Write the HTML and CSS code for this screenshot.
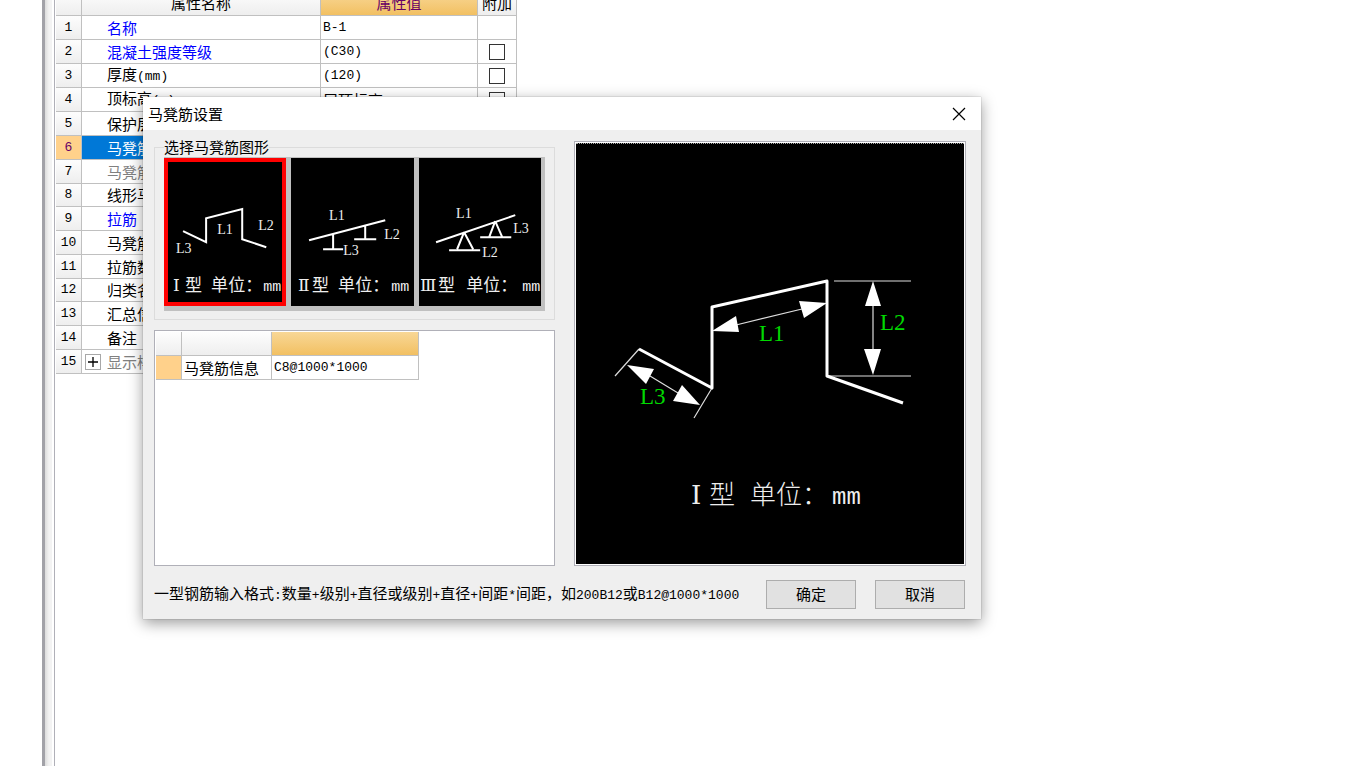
FILE: index.html
```html
<!DOCTYPE html>
<html lang="zh-CN">
<head>
<meta charset="utf-8">
<title>马凳筋设置</title>
<link rel="stylesheet" href="styles.css">
</head>
<body>
<div class="workspace">
  <div class="splitter"></div>
  <main class="properties">
    <table class="grid property-grid">
      <colgroup><col class="col-index"><col class="col-name"><col class="col-value"><col class="col-extra"></colgroup>
      <thead>
        <tr><th></th><th>属性名称</th><th class="active-head">属性值</th><th>附加</th></tr>
      </thead>
      <tbody>
        <tr><th class="latin">1</th><td class="name link">名称</td><td class="latin">B-1</td><td></td></tr>
        <tr><th class="latin">2</th><td class="name link">混凝土强度等级</td><td class="latin">(C30)</td><td class="tick"><input type="checkbox" aria-label="附加 混凝土强度等级"></td></tr>
        <tr><th class="latin">3</th><td class="name">厚度<span class="latin">(mm)</span></td><td class="latin">(120)</td><td class="tick"><input type="checkbox" aria-label="附加 厚度"></td></tr>
        <tr><th class="latin">4</th><td class="name">顶标高<span class="latin">(m)</span></td><td>层顶标高</td><td class="tick"><input type="checkbox" aria-label="附加 顶标高"></td></tr>
        <tr><th class="latin">5</th><td class="name">保护层厚度</td><td></td><td></td></tr>
        <tr class="selected"><th class="latin">6</th><td class="name">马凳筋参数图</td><td></td><td></td></tr>
        <tr><th class="latin">7</th><td class="name muted">马凳筋信息</td><td></td><td></td></tr>
        <tr><th class="latin">8</th><td class="name">线形马凳筋方向</td><td></td><td></td></tr>
        <tr><th class="latin">9</th><td class="name link">拉筋</td><td></td><td></td></tr>
        <tr><th class="latin">10</th><td class="name">马凳筋数量计算</td><td></td><td></td></tr>
        <tr><th class="latin">11</th><td class="name">拉筋数量计算</td><td></td><td></td></tr>
        <tr><th class="latin">12</th><td class="name">归类名称</td><td></td><td></td></tr>
        <tr><th class="latin">13</th><td class="name">汇总信息</td><td></td><td></td></tr>
        <tr><th class="latin">14</th><td class="name">备注</td><td></td><td></td></tr>
        <tr><th class="latin">15</th><td class="name muted expandable"><span class="tree-cell"><button class="expander" aria-label="展开"><svg viewBox="0 0 10 10" width="10" height="10"><path d="M0 5H10M5 0V10"/></svg></button>显示样式</span></td><td></td><td></td></tr>
      </tbody>
    </table>
  </main>
</div>

<section class="dialog" role="dialog" aria-labelledby="dialog-title">
  <header class="titlebar">
    <h1 id="dialog-title">马凳筋设置</h1>
    <button class="close" aria-label="关闭"><svg viewBox="0 0 14 14" width="14" height="14"><path d="M1 1L13 13M13 1L1 13"/></svg></button>
  </header>
  <div class="content">
    <div class="left">
      <fieldset class="shapes">
        <legend>选择马凳筋图形</legend>
        <div class="thumbs">
          <button class="thumb chosen" aria-pressed="true">
            <svg viewBox="0 0 122 148">
              <path class="bar" d="M19 73L42 84V60L78 51V81L102 89"/>
              <text class="mark" x="53" y="76">L1</text><text class="mark" x="94" y="72">L2</text><text class="mark" x="12" y="95">L3</text>
              <text class="caption" y="133"><tspan class="numeral" x="9">Ⅰ</tspan><tspan x="21">型</tspan><tspan x="47">单位：</tspan><tspan class="unit" x="99">mm</tspan></text>
            </svg>
          </button>
          <button class="thumb" aria-pressed="false">
            <svg viewBox="0 0 122 148">
              <path class="bar" d="M18 82L94 62M42 76V91M32 91H52M74 67V81M63 81H85"/>
              <text class="mark" x="38" y="62">L1</text><text class="mark" x="93" y="81">L2</text><text class="mark" x="52" y="97">L3</text>
              <text class="caption" y="133"><tspan class="numeral" x="7">Ⅱ</tspan><tspan x="21">型</tspan><tspan x="47">单位：</tspan><tspan class="unit" x="100">mm</tspan></text>
            </svg>
          </button>
          <button class="thumb" aria-pressed="false">
            <svg viewBox="0 0 122 148">
              <path class="bar" d="M17 84L96 57M30 92H61M61 79H92M45 74L38 91M45 74L54 91M76 63L70 79M76 63L83 79"/>
              <text class="mark" x="37" y="60">L1</text><text class="mark" x="63" y="99">L2</text><text class="mark" x="94" y="75">L3</text>
              <text class="caption" y="133"><tspan class="numeral" x="1">Ⅲ</tspan><tspan x="19">型</tspan><tspan x="47">单位：</tspan><tspan class="unit" x="103">mm</tspan></text>
            </svg>
          </button>
        </div>
      </fieldset>
      <div class="info-box">
        <table class="grid info-grid">
          <colgroup><col class="col-index"><col class="col-label"><col class="col-input"></colgroup>
          <thead><tr><th></th><th></th><th class="active-head"></th></tr></thead>
          <tbody><tr class="current"><th></th><td>马凳筋信息</td><td class="latin">C8@1000*1000</td></tr></tbody>
        </table>
      </div>
    </div>
    <div class="preview">
      <svg viewBox="0 1 388 420">
        <path class="fine" d="M39 233L63 206M136 245L118 275M258 138H335M251 233H335M297 160V210M160 182L226 166M74 233L102 250"/>
        <path class="heavy" d="M63 206L136 245V164L251 138V233L327 260"/>
        <path class="arrow" d="M297 138L289 163H305ZM297 232L288 206H305ZM136 188L160 173L163 189ZM251 160L223 158L228 175ZM51 222L78 226L70 241ZM124 262L106 242L97 258Z"/>
        <text class="dimension" x="183" y="198">L1</text><text class="dimension" x="304" y="187">L2</text><text class="dimension" x="64" y="261">L3</text>
        <text class="big-caption" y="361"><tspan class="numeral" x="115">Ⅰ</tspan><tspan x="133">型</tspan><tspan x="174">单位：</tspan><tspan class="unit" x="256">mm</tspan></text>
      </svg>
    </div>
  </div>
  <footer class="actions">
    <p>一型钢筋输入格式<span class="latin">:</span>数量<span class="latin">+</span>级别<span class="latin">+</span>直径或级别<span class="latin">+</span>直径<span class="latin">+</span>间距<span class="latin">*</span>间距，如<span class="latin">200B12</span>或<span class="latin">B12@1000*1000</span></p>
    <button class="action">确定</button>
    <button class="action">取消</button>
  </footer>
</section>
</body>
</html>
```
FILE: styles.css
```css
* { box-sizing: border-box; }

body {
  margin: 0;
  background: #fff;
  color: #000;
  font: 15px/20px "Noto Sans CJK SC", sans-serif;
}

button { font: inherit; color: inherit; padding: 0; }

.latin { font-family: "Liberation Mono", monospace; font-size: 13px; }

.workspace {
  display: flex;
  height: 100vh;
  overflow: hidden;
  padding-left: 42px;
}

.splitter {
  width: 10px;
  border-left: 3px solid #a2a2a8;
  background: linear-gradient(90deg, #dcdcdc, #f3f3f3 4px);
}

.properties {
  flex: 1;
  margin-left: 2px;
  padding-left: 1px;
  border-left: 1px solid #b0b0b8;
}

/* Grids shared by the property list and the dialog */
.grid {
  table-layout: fixed;
  border-collapse: separate;
  border-spacing: 0;
}

.grid th, .grid td {
  height: 24px;
  padding: 0 2px;
  border-right: 1px solid #c0c0c0;
  border-bottom: 1px solid #c0c0c0;
  font-weight: normal;
  line-height: 20px;
  white-space: nowrap;
  text-align: left;
}

.grid th {
  background: linear-gradient(#fdfdfd, #eee);
  text-align: center;
}

.grid .active-head {
  background: linear-gradient(#f8d796, #f2c062);
  color: #660066;
}

.col-index { width: 26px; }

/* The list is scrolled a little past its top edge */
.property-grid { width: 461px; margin-top: -8px; }
.property-grid .col-name { width: 239px; }
.property-grid .col-value { width: 157px; }
.property-grid .col-extra { width: 39px; }
.property-grid thead th { padding-bottom: 2px; }
.property-grid tbody tr:nth-child(4n) > * { height: 23px; }
.property-grid .name { padding-left: 25px; }
.property-grid .link { color: #00f; }
.property-grid .muted { color: #808080; }
.property-grid .selected th { background: #ffd18b; color: #660066; }
.property-grid .selected td { background: #0078d7; color: #fff; }
.property-grid .expandable { padding-left: 3px; }
.property-grid .tick { text-align: center; }

.tick input {
  appearance: none;
  display: block;
  width: 16px;
  height: 16px;
  margin: 0 auto;
  border: 1px solid #333;
  background: #fff;
}

.tree-cell { display: flex; align-items: center; gap: 6px; }

.expander {
  display: grid;
  place-items: center;
  width: 16px;
  height: 16px;
  border: 1px solid #a8a8a8;
  background: #fff;
}
.expander path { stroke: #000; stroke-width: 1.3; }

/* Dialog */
.dialog {
  position: absolute;
  top: 97px;
  left: 143px;
  width: 838px;
  background: #efefef;
  box-shadow: 0 4px 14px rgba(0, 0, 0, .4), 0 0 1px rgba(0, 0, 0, .4);
}

.titlebar {
  display: flex;
  align-items: center;
  justify-content: space-between;
  height: 33px;
  padding: 0 15px 0 5px;
  background: #fff;
}
.titlebar h1 { margin: 0; font-size: 15px; line-height: 20px; font-weight: normal; }

.close { display: flex; border: 0; background: none; }
.close path { stroke: #000; stroke-width: 1.2; }

.content {
  display: grid;
  grid-template-columns: 401fr 392fr;
  gap: 19px;
  padding: 11px 15px 0 11px;
}

.left { display: flex; flex-direction: column; gap: 10px; }

.shapes {
  min-width: 0;
  margin: -4px 0 0;
  padding: 0 9px 8px;
  border: 1px solid #dcdcdc;
}
.shapes legend { padding: 0; line-height: 20px; }

.thumbs {
  display: grid;
  grid-template-columns: repeat(3, 1fr);
  gap: 5px;
  padding: 1px 4px 5px 0;
  background: #c0c0c0;
}

.thumb { display: block; border: 0; background: #000; }
.thumb.chosen { outline: 4px solid #f00; outline-offset: -4px; }
.thumb svg { display: block; width: 100%; }

svg { fill: none; }
.bar { stroke: #fff; stroke-width: 2; }
.mark { fill: #eee; font: 14px "Liberation Serif", serif; }
.caption { fill: #eee; font-size: 17px; }
.caption .unit { font: 15px "Liberation Mono", monospace; }
.numeral { font-family: "Liberation Serif", "DejaVu Serif", serif; }

.info-box {
  flex: 1;
  padding: 1px;
  border: 1px solid #b0b0b8;
  background: #fff;
}
.info-grid { width: 263px; }
.info-grid .col-label { width: 90px; }
.info-grid .col-input { width: 147px; }
.info-grid .current th { background: #ffd18b; }

.preview {
  padding: 1px;
  border: 1px solid #b0b0b8;
  background: #fff;
}
.preview svg { display: block; width: 100%; background: #000; border-top: 1px dotted #aaa; }

.fine { stroke: #ddd; stroke-width: 1.2; }
.heavy { stroke: #fff; stroke-width: 3; stroke-linejoin: round; }
.arrow { fill: #fff; }
.dimension { fill: #00d800; font: 23px "Liberation Serif", serif; }
.big-caption { fill: #eee; font-size: 26px; font-weight: 300; }
.big-caption .unit { font: 24px "Liberation Mono", monospace; }

.actions {
  display: flex;
  align-items: center;
  gap: 19px;
  padding: 14px 16px 10px 11px;
}
.actions p { flex: 1; margin: 0; white-space: nowrap; }

.action {
  width: 90px;
  height: 29px;
  padding-bottom: 2px;
  border: 1px solid #adadad;
  background: #e1e1e1;
}
```
